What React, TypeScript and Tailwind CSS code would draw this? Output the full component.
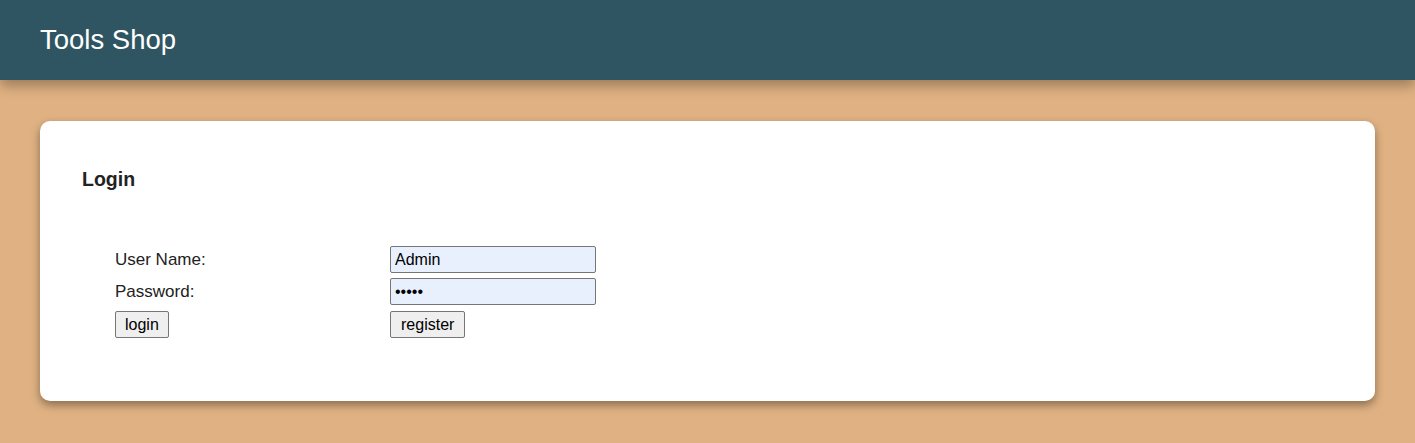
import React from 'react';

export default function App() {
  return (
    <div className="min-h-[443px] bg-[#e0b283] font-['Liberation_Sans',Arial,sans-serif] text-[#222]">
      <header className="relative z-10 flex h-[80px] items-center bg-[#2e5561] px-[40px] shadow-[0_6px_12px_rgba(0,0,0,0.3)]">
        <h1 className="text-[27.5px] leading-none text-white">Tools Shop</h1>
      </header>

      <main className="px-[40px] pt-[41px]">
        <div className="rounded-[10px] bg-white pl-[42px] pr-[42px] pt-[46px] pb-[63px] shadow-[0_4px_10px_rgba(0,0,0,0.4)]">
          <h2 className="text-[19.5px] font-bold leading-[24px] text-[#222]">Login</h2>

          <form className="ml-[33px] mt-[55px] flex flex-col gap-[5px] text-[17px] text-[#222]" onSubmit={(e) => e.preventDefault()}>
            <div className="flex items-center">
              <label className="w-[275px]">User Name:</label>
              <input
                type="text"
                defaultValue="Admin"
                className="h-[27px] w-[206px] rounded-[2px] border border-[#767676] bg-[#e8f0fe] px-[4px] text-[16px] text-black outline-none"
              />
            </div>
            <div className="flex items-center">
              <label className="w-[275px]">Password:</label>
              <input
                type="password"
                defaultValue="admin"
                className="h-[27px] w-[206px] rounded-[2px] border border-[#767676] bg-[#e8f0fe] px-[4px] text-[16px] text-black outline-none"
              />
            </div>
            <div className="flex items-center pt-[1px]">
              <div className="w-[275px]">
                <button type="submit" className="h-[27px] rounded-[2px] border border-[#767676] bg-[#efefef] px-[9px] text-[16px] text-black">
                  login
                </button>
              </div>
              <button type="button" className="h-[27px] rounded-[2px] border border-[#767676] bg-[#efefef] px-[10px] text-[16px] text-black">
                register
              </button>
            </div>
          </form>
        </div>
      </main>
    </div>
  );
}
